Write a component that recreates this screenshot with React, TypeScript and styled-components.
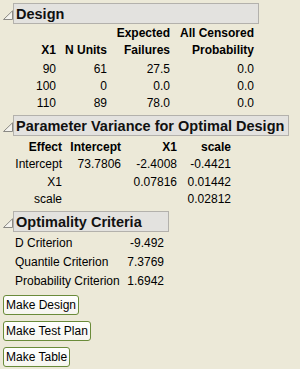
import React from 'react'
import styled, { createGlobalStyle } from 'styled-components';

const GlobalStyle = createGlobalStyle`
  html, body {
    margin: 0;
    padding: 0;
    background: #ECE9D8;
  }
  body {
    font-family: "Liberation Sans", Arial, sans-serif;
    color: #000;
  }
`;

const designRows = [
  { x1: '90', units: '61', failures: '27.5', prob: '0.0' },
  { x1: '100', units: '0', failures: '0.0', prob: '0.0' },
  { x1: '110', units: '89', failures: '78.0', prob: '0.0' },
];

const varianceRows = [
  { effect: 'Intercept', intercept: '73.7806', x1: '-2.4008', scale: '-0.4421' },
  { effect: 'X1', intercept: '', x1: '0.07816', scale: '0.01442' },
  { effect: 'scale', intercept: '', x1: '', scale: '0.02812' },
];

const criteria = [
  { label: 'D Criterion', value: '-9.492' },
  { label: 'Quantile Criterion', value: '7.3769' },
  { label: 'Probability Criterion', value: '1.6942' },
];

const Toggle = () => (
  <ToggleIcon width="10" height="10" viewBox="0 0 10 10">
    <path d="M0.5 9.5 L9.5 0.8 L9.5 9.5 Z" fill="#F4F3EE" stroke="#8A8984" strokeWidth="1" />
  </ToggleIcon>
)

const Outline = ({ title, width, gap, children }: { title: string; width: number; gap: number; children: React.ReactNode }) => (
  <Node $gap={gap}>
    <TitleRow>
      <Toggle />
      <TitleBox $width={width}>{title}</TitleBox>
    </TitleRow>
    {children}
  </Node>
)

const App = () => {
  return (
    <>
      <GlobalStyle />
      <Page>
        <Outline title="Design" width={246} gap={0}>
          <DesignTable>
            <colgroup>
              <col style={{ width: 42 }} />
              <col style={{ width: 51 }} />
              <col style={{ width: 63 }} />
              <col style={{ width: 84 }} />
            </colgroup>
            <thead>
              <tr>
                <Th></Th>
                <Th></Th>
                <Th>Expected</Th>
                <Th>All Censored</Th>
              </tr>
              <tr>
                <Th>X1</Th>
                <Th>N Units</Th>
                <Th>Failures</Th>
                <Th>Probability</Th>
              </tr>
            </thead>
            <DesignBody>
              {designRows.map((row) => (
                <tr key={row.x1}>
                  <Td>{row.x1}</Td>
                  <Td>{row.units}</Td>
                  <Td>{row.failures}</Td>
                  <Td>{row.prob}</Td>
                </tr>
              ))}
            </DesignBody>
          </DesignTable>
        </Outline>

        <Outline title="Parameter Variance for Optimal Design" width={276} gap={3}>
          <VarianceTable>
            <colgroup>
              <col style={{ width: 48 }} />
              <col style={{ width: 59 }} />
              <col style={{ width: 56 }} />
              <col style={{ width: 54 }} />
            </colgroup>
            <thead>
              <VarHeadRow>
                <Th>Effect</Th>
                <Th>Intercept</Th>
                <Th>X1</Th>
                <Th>scale</Th>
              </VarHeadRow>
            </thead>
            <tbody>
              {varianceRows.map((row) => (
                <VarRow key={row.effect}>
                  <Td>{row.effect}</Td>
                  <Td>{row.intercept}</Td>
                  <Td>{row.x1}</Td>
                  <Td>{row.scale}</Td>
                </VarRow>
              ))}
            </tbody>
          </VarianceTable>
        </Outline>

        <Outline title="Optimality Criteria" width={156} gap={2.5}>
          <CriteriaTable>
            <tbody>
              {criteria.map((c) => (
                <tr key={c.label}>
                  <CriteriaLabel>{c.label}</CriteriaLabel>
                  <CriteriaValue>{c.value}</CriteriaValue>
                </tr>
              ))}
            </tbody>
          </CriteriaTable>
        </Outline>

        <Buttons>
          <Button>Make Design</Button>
          <Button>Make Test Plan</Button>
          <Button>Make Table</Button>
        </Buttons>
      </Page>
    </>
  )
}

const Page = styled.div`
  width: 300px;
  height: 369px;
  padding: 3px 0 0 3px;
  box-sizing: border-box;
  overflow: hidden;
`;

const Node = styled.div<{ $gap: number }>`
  display: flex;
  flex-direction: column;
  margin-top: ${(p) => p.$gap}px;
`;

const TitleRow = styled.div`
  display: flex;
  align-items: center;
`;

const ToggleIcon = styled.svg`
  flex: none;
  width: 10px;
  height: 10px;
  margin-top: 2px;
`;

const TitleBox = styled.div<{ $width: number }>`
  width: ${(p) => p.$width}px;
  height: 21px;
  box-sizing: border-box;
  display: flex;
  align-items: center;
  padding-left: 2px;
  background: #E3E2DF;
  border: 1px solid #B3B1AC;
  font-size: 14.5px;
  font-weight: bold;
  color: #111;
  white-space: nowrap;
`;

const BaseTable = styled.table`
  border-collapse: collapse;
  border-spacing: 0;
  table-layout: fixed;
  margin-left: 11px;
  font-size: 12px;
`;

const DesignTable = styled(BaseTable)`
  margin-top: 1px;
  width: 240px;
`;

const DesignBody = styled.tbody`
  &::before {
    content: '';
    display: table-row;
    height: 2px;
  }
`;

const VarianceTable = styled(BaseTable)`
  margin-top: 2px;
  width: 217px;
`;

const VarHeadRow = styled.tr`
  height: 18px;
`;

const VarRow = styled.tr`
  height: 17.5px;
  td {
    line-height: 17.5px;
  }
`;

const Th = styled.th`
  text-align: right;
  font-weight: bold;
  padding: 0;
  line-height: 17px;
  white-space: nowrap;
`;

const Td = styled.td`
  text-align: right;
  padding: 0;
  line-height: 17px;
  white-space: nowrap;
`;

const CriteriaTable = styled(BaseTable)`
  margin-top: 2px;
  width: 150px;
`;

const CriteriaLabel = styled.td`
  text-align: left;
  padding: 0 0 0 1px;
  line-height: 19px;
  white-space: nowrap;
  width: 108px;
`;

const CriteriaValue = styled.td`
  text-align: right;
  padding: 0;
  line-height: 19px;
  white-space: nowrap;
`;

const Buttons = styled.div`
  display: flex;
  flex-direction: column;
  align-items: flex-start;
  gap: 6px;
  margin-top: 4px;
`;

const Button = styled.button`
  height: 20px;
  padding: 0 2px;
  box-sizing: border-box;
  border: 1px solid #6A8B3A;
  border-radius: 3px;
  background: linear-gradient(#FFFFFF, #F6F5EF);
  font-family: "Liberation Sans", Arial, sans-serif;
  font-size: 12px;
  color: #000;
  cursor: pointer;
`;

export default App
